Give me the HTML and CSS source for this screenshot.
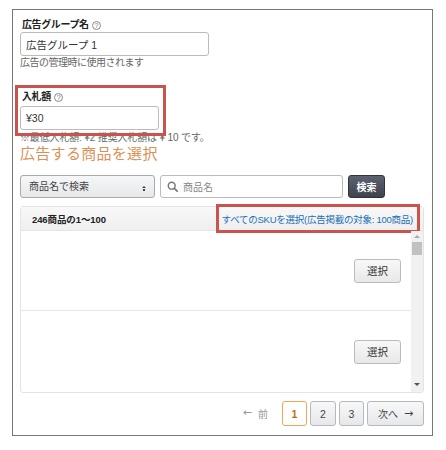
FILE: index.html
```html
<!DOCTYPE html>
<html lang="ja">
<head>
  <meta charset="UTF-8" />
  <title>広告グループ</title>
  <link rel="stylesheet" href="styles.css">
</head>
<body>
  <div class="box">
    <div class="field">
      <label class="field-label">広告グループ名 <span class="help">?</span></label>
      <input class="text-input name-input" type="text" value="広告グループ 1" />
      <p class="hint">広告の管理時に使用されます</p>
    </div>

    <div class="field bid-field">
      <label class="field-label">入札額 <span class="help">?</span></label>
      <input class="text-input bid-input" type="text" value="¥30" />
      <p class="hint bid-hint">※最低入札額: ¥2 推奨入札額は ¥ 10 です。</p>
      <div class="mark mark-bid"></div>
    </div>

    <h2 class="title">広告する商品を選択</h2>

    <div class="search-row">
      <div class="select">商品名で検索<span class="updown"></span></div>
      <div class="search-input">
        <svg class="search-icon" width="12" height="12" viewBox="0 0 14 14">
          <circle cx="5.5" cy="5.5" r="4" fill="none" stroke="#777" stroke-width="1.7"/>
          <path d="M8.5 8.5L12.5 12.5" stroke="#777" stroke-width="2"/>
        </svg>
        商品名
      </div>
      <button class="search-btn">検索</button>
    </div>

    <div class="panel">
      <div class="panel-head">
        <strong class="count">246商品の1～100</strong>
        <a class="all-link">すべてのSKUを選択(広告掲載の対象: 100商品)</a>
        <div class="mark mark-all"></div>
      </div>
      <div class="panel-body">
        <div class="rows">
          <div class="row"><button class="btn">選択</button></div>
          <div class="row"><button class="btn">選択</button></div>
        </div>
        <div class="scrollbar">
          <span class="arrow-up"></span>
          <span class="thumb"></span>
          <span class="arrow-down"></span>
        </div>
      </div>
    </div>

    <div class="pager">
      <span class="prev"><span class="arrow">←</span>前</span>
      <button class="page current">1</button>
      <button class="page wide">2</button>
      <button class="page">3</button>
      <button class="page next">次へ<span class="arrow">→</span></button>
    </div>
  </div>
</body>
</html>
```

FILE: styles.css
```css
body {
  margin: 0;
  background: #fff;
  font-family: "Liberation Sans", "Noto Sans CJK JP", sans-serif;
  font-size: 10px;
  color: #333;
}

.box {
  box-sizing: border-box;
  width: 421px;
  height: 427px;
  margin: 9px 0 0 12px;
  padding: 8px 7px 0;
  border: 1px solid #777;
}

.field {
  position: relative;
}

.field-label {
  display: block;
  height: 14px;
  padding-left: 2px;
  line-height: 14px;
  font-weight: bold;
  letter-spacing: -0.4px;
  color: #222;
}

.help {
  display: inline-block;
  box-sizing: border-box;
  width: 9px;
  height: 9px;
  margin-left: 1px;
  border: 1px solid #888;
  border-radius: 50%;
  font-size: 7px;
  line-height: 7px;
  font-weight: normal;
  letter-spacing: 0;
  text-align: center;
  color: #777;
}

.text-input {
  display: block;
  box-sizing: border-box;
  height: 24px;
  padding: 0 5px;
  border: 1px solid #bbb;
  border-radius: 3px;
  font-family: inherit;
  font-size: 10.5px;
  color: #333;
}

.name-input {
  width: 189px;
}

.hint {
  margin: 0;
  line-height: 13px;
  letter-spacing: -0.5px;
  color: #666;
}

.bid-field {
  margin-top: 21px;
}

.bid-input {
  width: 139px;
  margin-top: 2px;
}

.bid-hint {
  margin-top: 1px;
  letter-spacing: -0.15px;
}

.mark {
  position: absolute;
  box-sizing: border-box;
  border: 3px solid #c9534d;
}

.mark-bid {
  left: -5px;
  top: -5px;
  width: 151px;
  height: 51px;
}

.title {
  margin: 0;
  font-size: 15px;
  line-height: 20px;
  letter-spacing: 0.3px;
  font-weight: normal;
  color: #dc9055;
}

.search-row {
  display: flex;
  margin-top: 11px;
  height: 23px;
}

.select {
  position: relative;
  box-sizing: border-box;
  width: 135px;
  padding-left: 8px;
  line-height: 21px;
  border: 1px solid #aaa;
  border-radius: 3px;
  background: linear-gradient(#f6f7f8, #e6e8ea);
  color: #444;
}

.updown {
  position: absolute;
  right: 8px;
  top: 8px;
  width: 0;
  height: 2px;
  border-left: 2px solid transparent;
  border-right: 2px solid transparent;
  border-bottom: 2px solid #444;
  box-shadow: 0 4px 0 -1px #444;
}

.search-input {
  display: flex;
  align-items: center;
  gap: 4px;
  box-sizing: border-box;
  width: 183px;
  margin-left: 5px;
  padding-left: 6px;
  border: 1px solid #bbb;
  border-radius: 3px;
  color: #888;
}

.search-btn {
  width: 37px;
  margin-left: 5px;
  padding: 0;
  border: 1px solid #333;
  border-radius: 3px;
  background: linear-gradient(#5c6270, #3f4350);
  color: #fff;
  font-family: inherit;
  font-size: 10px;
  font-weight: bold;
}

.panel {
  box-sizing: border-box;
  width: 404px;
  height: 187px;
  margin-top: 8px;
  border: 1px solid #e4e4e4;
  border-radius: 3px;
}

.panel-head {
  position: relative;
  display: flex;
  justify-content: space-between;
  align-items: center;
  height: 23px;
  padding: 0 10px 0 11px;
  background: linear-gradient(#f8f8f8, #efefef);
  border-bottom: 1px solid #e4e4e4;
}

.count {
  font-size: 9.5px;
  letter-spacing: -0.1px;
  color: #222;
}

.all-link {
  font-size: 9.5px;
  letter-spacing: -0.25px;
  color: #1a6fb5;
}

.mark-all {
  right: 3px;
  top: -3px;
  width: 204px;
  height: 29px;
}

.panel-body {
  display: flex;
  height: 161px;
}

.rows {
  flex: 1;
}

.row {
  display: flex;
  justify-content: flex-end;
  align-items: center;
  box-sizing: border-box;
  height: 80px;
  padding-right: 10px;
  border-bottom: 1px solid #e8e8e8;
}

.row:last-child {
  border-bottom: none;
  height: 81px;
}

.btn {
  width: 47px;
  height: 24px;
  padding: 0;
  border: 1px solid #bbb;
  border-radius: 3px;
  background: linear-gradient(#f8f8f8, #e8e8e8);
  color: #333;
  font-family: inherit;
  font-size: 10.5px;
}

.scrollbar {
  position: relative;
  width: 12px;
  background: #f1f1f1;
}

.thumb {
  position: absolute;
  left: 1px;
  top: 11px;
  width: 10px;
  height: 13px;
  background: #c1c1c1;
}

.arrow-up, .arrow-down {
  position: absolute;
  left: 3px;
  width: 0;
  border-left: 3px solid transparent;
  border-right: 3px solid transparent;
}

.arrow-up {
  top: 4px;
  border-bottom: 3px solid #aaa;
}

.arrow-down {
  bottom: 6px;
  border-top: 3px solid #555;
}

.pager {
  display: flex;
  justify-content: flex-end;
  align-items: center;
  gap: 3px;
  width: 404px;
  margin-top: 8px;
}

.prev {
  display: flex;
  gap: 6px;
  margin-right: 11px;
  color: #999;
}

.arrow {
  font-family: "DejaVu Sans", sans-serif;
  font-size: 11px;
  line-height: 13px;
}

.page {
  width: 25px;
  height: 25px;
  padding: 0;
  border: 1px solid #b5b8bd;
  border-radius: 3px;
  background: linear-gradient(#f8f8f9, #e6e8ea);
  color: #444;
  font-family: inherit;
  font-size: 10.5px;
}

.wide {
  width: 26px;
}

.current {
  border-color: #f0a84f;
  background: #fff;
  color: #c4681a;
  font-weight: bold;
}

.next {
  display: flex;
  justify-content: center;
  align-items: center;
  gap: 6px;
  width: 57px;
  font-size: 10px;
}
```
